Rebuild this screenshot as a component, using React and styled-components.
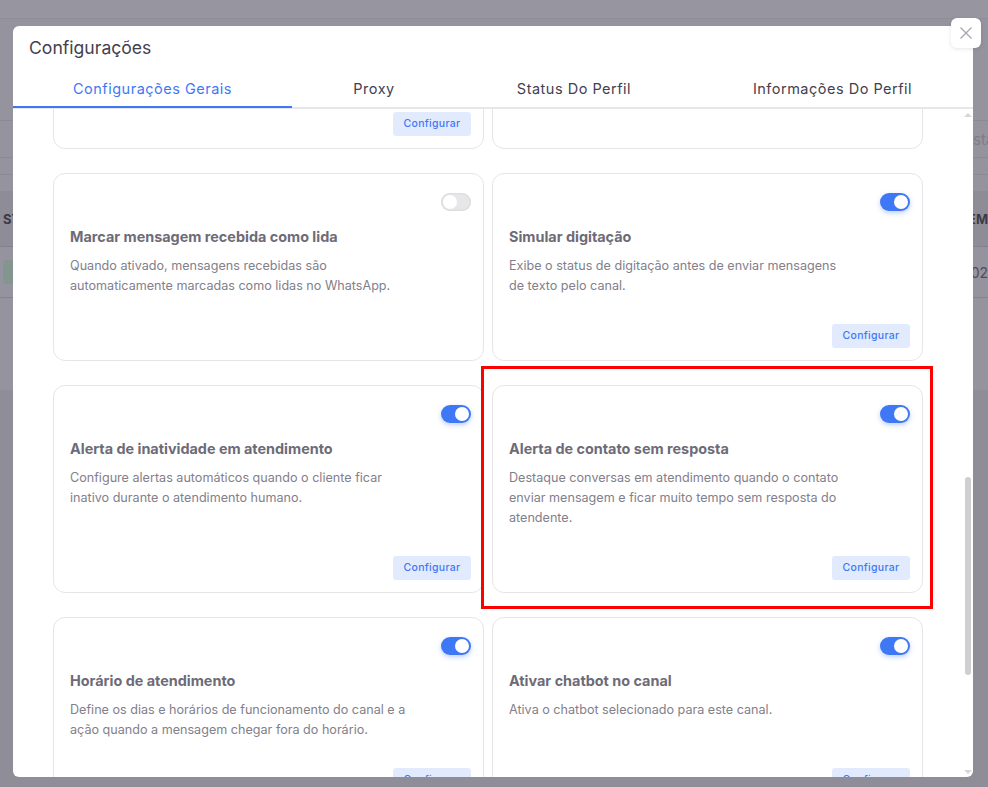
import styled, { createGlobalStyle } from "styled-components";

const GlobalStyle = createGlobalStyle`
  html, body {
    margin: 0;
    padding: 0;
    height: 100%;
    overflow: hidden;
    background: #95939d;
    font-family: "Inter", "Noto Sans", sans-serif;
  }
  * { box-sizing: border-box; }
`;

const Page = styled.div`
  position: relative;
  height: 787px;
  width: 988px;
  overflow: hidden;
`;

const Backdrop = styled.div`
  display: flex;
  flex-direction: column;
  height: 100%;
`;

const TopBar = styled.div`
  height: 19px;
  background: #97959f;
  border-bottom: 1px solid #8e8c96;
`;

const Spacer = styled.div`
  flex: ${(p) => (p.$grow ? 1 : `0 0 ${p.$height}px`)};
  background: ${(p) => p.$bg || "transparent"};
`;

const SearchRow = styled.div`
  height: 38px;
  display: flex;
  justify-content: flex-end;
  align-items: center;
  border-top: 1px solid #8b8993;
  border-bottom: 1px solid #8b8993;
`;

const SearchHint = styled.span`
  width: 15px;
  overflow: hidden;
  font-size: 15px;
  color: #7f7d88;
`;

const Divider = styled.div`
  height: 1px;
  background: #8b8993;
`;

const TableHead = styled.div`
  height: 56px;
  display: flex;
  justify-content: space-between;
  align-items: center;
  background: #8e8c96;
  border-bottom: 1px solid #80808f;
  font-size: 13px;
  font-weight: 700;
  color: #3d3a48;
`;

const HeadCell = styled.span`
  width: 15px;
  overflow: hidden;
  white-space: nowrap;
  direction: ${(p) => (p.$end ? "rtl" : "ltr")};
  padding-left: ${(p) => (p.$end ? "0" : "3px")};
`;

const TableRow = styled.div`
  height: 51px;
  display: flex;
  justify-content: space-between;
  align-items: center;
  border-bottom: 1px solid #85838d;
  font-size: 14px;
  color: #4f4d59;
`;

const StatusChip = styled.span`
  display: block;
  width: 12px;
  height: 24px;
  margin-left: 3px;
  border-radius: 4px;
  background: #82968f;
`;

const RowCell = styled.span`
  width: 15px;
  overflow: hidden;
  direction: rtl;
  white-space: nowrap;
`;

const Modal = styled.div`
  position: absolute;
  top: 26px;
  left: 13px;
  width: 960px;
  height: 751px;
  display: flex;
  flex-direction: column;
  background: #fff;
  border-radius: 6px;
`;

const CloseBtn = styled.button`
  position: absolute;
  top: -8px;
  right: -8px;
  width: 30px;
  height: 30px;
  padding: 0;
  border: none;
  border-radius: 6px;
  background: #fff;
  color: #a5a3ae;
  display: flex;
  align-items: center;
  justify-content: center;
  box-shadow: 0 1px 4px rgba(47, 43, 61, 0.12);
`;

const Title = styled.h5`
  margin: 0;
  padding: 10px 16px 0;
  height: 41px;
  font-size: 17.6px;
  line-height: 24px;
  font-weight: 400;
  color: #444050;
`;

const Tabs = styled.div`
  display: flex;
  height: 42px;
  border-bottom: 2px solid #e6e6e8;
`;

const Tab = styled.div`
  flex: ${(p) => p.$flex};
  height: 41px;
  display: flex;
  align-items: center;
  justify-content: center;
  padding-top: 3px;
  font-size: 14.5px;
  letter-spacing: 0.5px;
  color: ${(p) => (p.$active ? "#3f78f5" : "#444050")};
  border-bottom: 2px solid ${(p) => (p.$active ? "#3f78f5" : "transparent")};
`;

const Body = styled.div`
  position: relative;
  flex: 1;
  min-height: 0;
  overflow: hidden;
  display: flex;
`;

const Scroller = styled.div`
  flex: 1;
  min-width: 0;
  overflow: hidden;
  padding: 0 49px 0 40px;
`;

const Grid = styled.div`
  display: grid;
  grid-template-columns: 431px 431px;
  column-gap: 8px;
  row-gap: 24px;
  margin-top: -20px;
`;

const Card = styled.div`
  position: relative;
  display: flex;
  flex-direction: column;
  height: ${(p) => p.$height}px;
  padding: 19px 12px 12px 16px;
  border: 1px solid #e6e6e8;
  border-radius: 12px;
  background: #fff;
  justify-content: ${(p) => (p.$stub ? "flex-end" : "flex-start")};
`;

// the red annotation drawn over the screenshot, around one card
const Highlight = styled.div`
  position: absolute;
  top: -20px;
  left: -12px;
  right: -11px;
  bottom: -17px;
  border: 3px solid #f00;
  pointer-events: none;
  z-index: 2;
`;

const ToggleRow = styled.div`
  display: flex;
  justify-content: flex-end;
  height: 18px;
`;

const Toggle = styled.span`
  position: relative;
  display: block;
  width: 30px;
  height: 18px;
  border-radius: 9px;
  background: ${(p) => (p.$on ? "#3f78f5" : "#e7e7e9")};
  box-shadow: ${(p) =>
    p.$on ? "0 2px 5px rgba(63, 120, 245, 0.35)" : "inset 0 0 2px rgba(47, 43, 61, 0.2)"};

  &::after {
    content: "";
    position: absolute;
    top: 2px;
    left: ${(p) => (p.$on ? "14px" : "2px")};
    width: 14px;
    height: 14px;
    border-radius: 50%;
    background: #fff;
  }
`;

const CardTitle = styled.h6`
  margin: 15px 0 0;
  font-size: 14.4px;
  line-height: 22px;
  font-weight: 700;
  color: #6d6b77;
`;

const CardText = styled.p`
  margin: 8px 0 0;
  max-width: 344px;
  font-size: 12.6px;
  line-height: 20px;
  color: #82808b;
`;

const CardFooter = styled.div`
  margin-top: auto;
  display: flex;
  justify-content: flex-end;
`;

const ConfigBtn = styled.button`
  width: 78px;
  height: 24px;
  padding: 0 0 1px;
  border: none;
  border-radius: 3px;
  background: #e2ebfe;
  color: #3f78f5;
  font-family: inherit;
  font-size: 10.5px;
  font-weight: 500;
  letter-spacing: 0.3px;
`;

const Track = styled.div`
  position: absolute;
  top: 0;
  right: 0;
  bottom: 0;
  width: 16px;
`;

const Thumb = styled.div`
  position: absolute;
  top: 368px;
  left: 8px;
  width: 6px;
  height: 198px;
  border-radius: 3px;
  background: #cfcfd1;
`;

const Arrow = styled.div`
  position: absolute;
  left: 7px;
  width: 0;
  height: 0;
  border-left: 4px solid transparent;
  border-right: 4px solid transparent;
  ${(p) =>
    p.$up
      ? "top: 4px; border-bottom: 4px solid #d6d6d8;"
      : "bottom: 3px; border-top: 4px solid #d6d6d8;"}
`;

const cards = [
  { id: "a", stub: true, height: 60, button: true },
  { id: "b", stub: true, height: 60 },
  {
    id: "c",
    height: 188,
    on: false,
    title: "Marcar mensagem recebida como lida",
    text: "Quando ativado, mensagens recebidas são automaticamente marcadas como lidas no WhatsApp.",
  },
  {
    id: "d",
    height: 188,
    on: true,
    button: true,
    title: "Simular digitação",
    text: "Exibe o status de digitação antes de enviar mensagens de texto pelo canal.",
  },
  {
    id: "e",
    height: 208,
    on: true,
    button: true,
    title: "Alerta de inatividade em atendimento",
    text: "Configure alertas automáticos quando o cliente ficar inativo durante o atendimento humano.",
  },
  {
    id: "f",
    height: 208,
    on: true,
    button: true,
    marked: true,
    title: "Alerta de contato sem resposta",
    text: "Destaque conversas em atendimento quando o contato enviar mensagem e ficar muito tempo sem resposta do atendente.",
  },
  {
    id: "g",
    height: 188,
    on: true,
    button: true,
    title: "Horário de atendimento",
    text: "Define os dias e horários de funcionamento do canal e a ação quando a mensagem chegar fora do horário.",
  },
  {
    id: "h",
    height: 188,
    on: true,
    button: true,
    title: "Ativar chatbot no canal",
    text: "Ativa o chatbot selecionado para este canal.",
  },
];

function SettingCard({ card }) {
  if (card.stub) {
    return (
      <Card $stub $height={card.height}>
        {card.button && (
          <CardFooter>
            <ConfigBtn>Configurar</ConfigBtn>
          </CardFooter>
        )}
      </Card>
    );
  }
  return (
    <Card $height={card.height}>
      {card.marked && <Highlight />}
      <ToggleRow>
        <Toggle $on={card.on} />
      </ToggleRow>
      <CardTitle>{card.title}</CardTitle>
      <CardText>{card.text}</CardText>
      {card.button && (
        <CardFooter>
          <ConfigBtn>Configurar</ConfigBtn>
        </CardFooter>
      )}
    </Card>
  );
}

export default function App() {
  return (
    <>
      <GlobalStyle />
      <Page>
        <Backdrop>
          <TopBar />
          <Spacer $height={101} />
          <SearchRow>
            <span />
            <SearchHint>sta</SearchHint>
          </SearchRow>
          <Spacer $height={16} />
          <Divider />
          <Spacer $height={16} />
          <TableHead>
            <HeadCell>ST</HeadCell>
            <HeadCell $end>EM</HeadCell>
          </TableHead>
          <TableRow>
            <StatusChip />
            <RowCell>02</RowCell>
          </TableRow>
          <Spacer $height={92} />
          <Spacer $grow $bg="#8f8d97" />
        </Backdrop>
        <Modal>
          <CloseBtn aria-label="Fechar">
            <svg width="14" height="14" viewBox="0 0 14 14" fill="none" stroke="currentColor" strokeWidth="1.2">
              <path d="M1.5 1.5l11 11M12.5 1.5l-11 11" />
            </svg>
          </CloseBtn>
          <Title>Configurações</Title>
          <Tabs>
            <Tab $flex="0 0 279px" $active>Configurações Gerais</Tab>
            <Tab $flex="0 0 164px">Proxy</Tab>
            <Tab $flex="0 0 236px">Status Do Perfil</Tab>
            <Tab $flex="1">Informações Do Perfil</Tab>
          </Tabs>
          <Body>
            <Scroller>
              <Grid>
                {cards.map((c) => (
                  <SettingCard key={c.id} card={c} />
                ))}
              </Grid>
            </Scroller>
            <Track>
              <Arrow $up />
              <Thumb />
              <Arrow />
            </Track>
          </Body>
        </Modal>
      </Page>
    </>
  );
}
